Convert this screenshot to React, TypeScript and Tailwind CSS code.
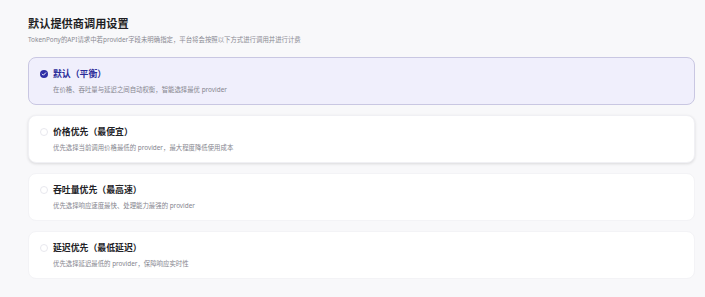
import { useState } from 'react';

const options = [
  { id: 'balanced', title: '默认（平衡）', desc: '在价格、吞吐量与延迟之间自动权衡，智能选择最优 provider' },
  { id: 'price', title: '价格优先（最便宜）', desc: '优先选择当前调用价格最低的 provider，最大程度降低使用成本' },
  { id: 'throughput', title: '吞吐量优先（最高速）', desc: '优先选择响应速度最快、处理能力最强的 provider' },
  { id: 'latency', title: '延迟优先（最低延迟）', desc: '优先选择延迟最低的 provider，保障响应实时性' },
];

function Radio({ checked }: { checked: boolean }) {
  if (checked) {
    return (
      <svg width="8" height="8" viewBox="0 0 16 16" className="shrink-0">
        <circle cx="8" cy="8" r="8" fill="#2f2fa6" />
        <path d="M4.6 8.2l2.2 2.2 4.6-4.8" fill="none" stroke="#fff" strokeWidth="2" strokeLinecap="round" strokeLinejoin="round" />
      </svg>
    );
  }
  return <span className="block h-[8px] w-[8px] shrink-0 rounded-full border border-[#e8e8ee] bg-white" />;
}

export default function App() {
  const [selected, setSelected] = useState('balanced');

  return (
    <div
      className="min-h-[297px] w-full bg-[#f8f8fa] px-[28px] pt-[16px] pb-[16px]"
      style={{ fontFamily: '"Noto Sans", "Noto Sans CJK SC", sans-serif' }}
    >
      <h1 className="text-[11.2px] font-bold leading-[16px] text-[#1f1f24]">默认提供商调用设置</h1>
      <p className="mt-[3px] text-[6.4px] leading-[10px] text-[#8a8a93]">
        TokenPony的API请求中若provider字段未明确指定，平台将会按照以下方式进行调用并进行计费
      </p>
      <div className="mt-[12px] flex w-[667px] flex-col gap-[10px]">
        {options.map((o, i) => {
          const active = selected === o.id;
          return (
            <button
              key={o.id}
              onClick={() => setSelected(o.id)}
              className={
                'flex h-[48px] flex-col justify-center rounded-[8px] border pl-[11px] text-left ' +
                (active
                  ? 'border-[#c9c7e2] bg-[#f0effc]'
                  : i === 1
                    ? 'border-[#f0f0f4] bg-white shadow-[0_1px_3px_rgba(0,0,0,0.12)]'
                    : 'border-[#f3f3f6] bg-white')
              }
            >
              <div className="flex items-center gap-[5px]">
                <Radio checked={active} />
                <span
                  className={
                    'text-[8.9px] font-bold leading-[12px] ' + (active ? 'text-[#2a2a98]' : 'text-[#222226]')
                  }
                >
                  {o.title}
                </span>
              </div>
              <div className="mt-[5px] pl-[13px] text-[6.4px] leading-[9px] text-[#85858e]">{o.desc}</div>
            </button>
          );
        })}
      </div>
    </div>
  );
}
